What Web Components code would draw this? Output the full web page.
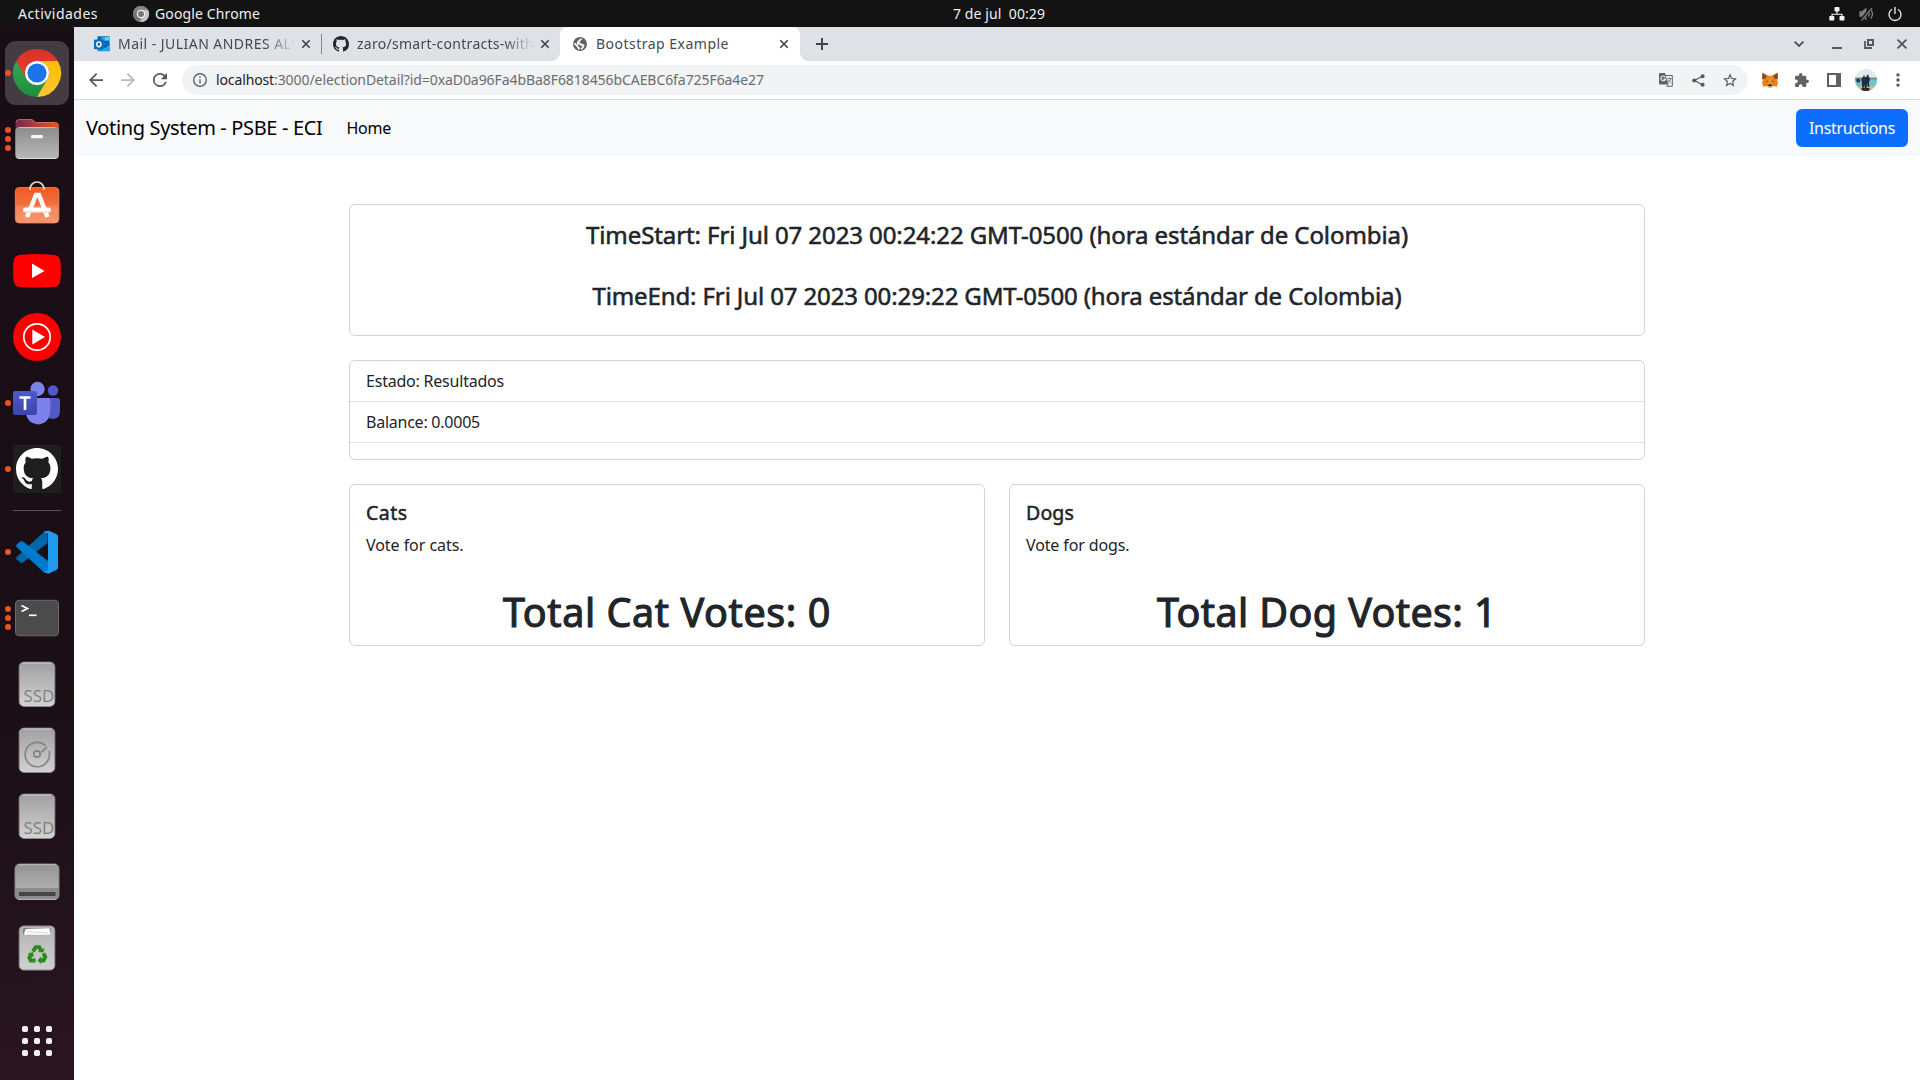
<!DOCTYPE html>
<html lang="es">
<head>
<meta charset="utf-8">
<title>Bootstrap Example</title>
<style>
html,body{margin:0;height:100%;overflow:hidden;background:#fff}
body{font-family:"Noto Sans","Open Sans",sans-serif}
</style>
</head>
<body>
<desk-top></desk-top>
<script>
const define=(name,html,setup)=>customElements.define(name,class extends HTMLElement{
  connectedCallback(){
    if(this.shadowRoot)return;
    this.attachShadow({mode:'open'}).innerHTML=typeof html==='function'?html(this):html;
    if(setup)setup(this);
  }
});

/* ---------- icon shapes ---------- */
const GH='<path d="M8 0C3.58 0 0 3.58 0 8c0 3.54 2.29 6.53 5.47 7.59.4.07.55-.17.55-.38 0-.19-.01-.82-.01-1.49-2.01.37-2.53-.49-2.69-.94-.09-.23-.48-.94-.82-1.13-.28-.15-.68-.52-.01-.53.63-.01 1.08.58 1.23.82.72 1.21 1.87.87 2.33.66.07-.52.28-.87.51-1.07-1.78-.2-3.64-.89-3.64-3.95 0-.87.31-1.59.82-2.15-.08-.2-.36-1.02.08-2.12 0 0 .67-.21 2.2.82.64-.18 1.32-.27 2-.27s1.36.09 2 .27c1.53-1.04 2.2-.82 2.2-.82.44 1.1.16 1.92.08 2.12.51.56.82 1.27.82 2.15 0 3.07-1.87 3.75-3.65 3.95.29.25.54.73.54 1.48 0 1.07-.01 1.93-.01 2.2 0 .21.15.46.55.38A8.01 8.01 0 0 0 16 8c0-4.42-3.58-8-8-8z"/>';
const lin=(id,a,b,dir='x1="0" y1="0" x2="0" y2="1"')=>`<linearGradient id="${id}" ${dir}><stop offset="0" stop-color="${a}"/><stop offset="1" stop-color="${b}"/></linearGradient>`;
const SSD=`<defs>${lin('g','#a0a0a0','#d2d2d2')}</defs><rect x="6.2" y="2.2" width="35.6" height="44" rx="4.5" fill="url(#g)" stroke="#929292"/><path d="M10 3h28M10 45.7h28" stroke="#dedede" stroke-width=".8"/>`;
const ICONS={
 chrome:['0 0 48 48',`<defs>${lin('r','#d93025','#ea4335')}${lin('gn','#34a853','#1e8e3e')}${lin('y','#fbbc04','#fcc934')}</defs>
  <path fill="url(#gn)" d="M13.6 30 3.2 12A24 24 0 0 0 24 48l10.4-18A12 12 0 0 1 13.6 30z"/>
  <path fill="url(#y)" d="M34.4 30 24 48A24 24 0 0 0 44.8 12H24a12 12 0 0 1 10.4 18z"/>
  <path fill="url(#r)" d="M13.6 30A12 12 0 0 1 24 12h20.8A24 24 0 0 0 3.2 12z"/>
  <circle cx="24" cy="24" r="12" fill="#fff"/><circle cx="24" cy="24" r="9.6" fill="#1a73e8"/>`],
 chromegray:['0 0 16 16',`<circle cx="8" cy="8" r="8" fill="#a5a5a5"/><path d="M8 8 1.1 4A8 8 0 0 0 7 15.9z" fill="#757575"/><path d="M8 4h7A8 8 0 0 0 1.1 4L5 9z" fill="#858585"/><path d="M15 4H8v4l3 2-3.4 6A8 8 0 0 0 15 4z" fill="#c5c5c5"/><circle cx="8" cy="8" r="4.2" fill="#f4f4f4"/><circle cx="8" cy="8" r="3" fill="#777"/>`],
 files:['0 0 48 48',`<defs>${lin('f','#8c8c8c','#b9b9b9')}${lin('o','#772953','#e95420','x1="0" y1="0" x2="1" y2="0"')}</defs>
  <path d="M2.5 34V8q0-4 4-4h11q2 0 3.200 1.300L22.500 7H42q4 0 4 4v24z" fill="url(#o)"/><path d="M3 8q0-3.500 3.500-3.500h11q2 0 3.200 1.300L22.300 7.500H42" fill="none" stroke="#c98" stroke-opacity=".5"/>
  <rect x="2.300" y="12" width="43.600" height="32" rx="4" fill="url(#f)"/><path d="M6 12.600h36" stroke="#c4c4c4"/><path d="M5 43.500h38" stroke="#dcdcdc"/><rect x="18" y="20" width="12" height="3.200" rx="1.200" fill="#f4f4f4"/>`],
 store:['0 0 48 48',`<defs>${lin('s','#f05a22','#f5875a')}</defs><rect x="2.300" y="6.500" width="43.600" height="35.500" rx="4" fill="url(#s)" stroke="#f38b5d" stroke-width=".8"/><path d="M3 24.500h42.300V38q0 3.500-3.500 3.500H6.500Q3 41.500 3 38z" fill="#fff" fill-opacity=".13"/>
  <path d="M17 9V8a7 7 0 0 1 14 0v1" fill="none" stroke="#f6dcae" stroke-width="1.700"/><path d="M14 36 23 14h3l8.500 22" fill="none" stroke="#fff" stroke-width="4.500"/><rect x="10" y="26.500" width="28" height="5" rx="2.500" fill="#fff"/><path d="M11 31h26" stroke="#f7b79c" stroke-width=".7"/>`],
 youtube:['0 0 48 48','<path d="M7 8Q24 6 41 8q5.500.5 6.300 6 1.200 10 0 20-.8 5.500-6.300 6-17 1.600-34 0-5.500-.5-6.300-6-1.200-10 0-20Q1.500 8.500 7 8z" fill="#f00"/><path d="m19 16.500 12.500 7.500L19 31z" fill="#fff"/>'],
 ytmusic:['0 0 48 48','<circle cx="24" cy="24" r="24" fill="#f00"/><circle cx="24" cy="24" r="13.200" fill="none" stroke="#fff" stroke-width="1.700"/><path d="M19.300 16.500 32 24l-12.700 7.500z" fill="#fff"/>'],
 teams:['0 0 48 48',`<defs>${lin('t','#5059c9','#3c45ab')}</defs><circle cx="40" cy="11.500" r="5.200" fill="#5059c9"/><path d="M34 19h10.500q2.500 0 2.500 2.500V32q0 7.500-7 8-5 0-7-4z" fill="#5059c9"/><circle cx="24.500" cy="10" r="7.200" fill="#7b83eb"/><path d="M15 19h20q2.300 0 2.300 2.300V32q-1 12.500-12.500 13.500Q14 44.500 12.500 33z" fill="#7b83eb"/><rect y="12" width="24" height="24" rx="2" fill="url(#t)"/><path d="M6.500 18.500h11M12 18.500V31" stroke="#fff" stroke-width="2.700" fill="none"/>`],
 github:['0 0 48 48',`<rect width="48" height="48" fill="#1e1e1e"/><g transform="translate(3 3) scale(2.625)" fill="#fff">${GH}</g>`],
 gh:['0 0 16 16',`<g fill="#24292f">${GH}</g>`],
 vscode:['0 0 48 48',`<path d="M34.500 3.500v12L10 34.500q-1.500 1-2.700 0l-3.700-3q-1.200-1.300 0-2.500L31 4z" fill="#0065a9"/><path d="M35 44.500V32.500L10 13.500q-1.500-1-2.700 0l-3.700 3q-1.200 1.300 0 2.500L31 44.500z" fill="#007acc"/><path d="M33 3.300q2-1 3.500-.3L44 6.600q1 .5 1 2v31q0 1.500-1 2l-7.500 3.600q-1.500.7-3-.2L35 43V5z" fill="#1f9cf0"/><path d="M30.500 3.500Q33 6 35 5v38q-2-1-4.500 1.500l5.500.5V3z" fill="#1f9cf0"/><path d="M35 15v18L23.500 24z" fill="#1b0f16"/>`],
 terminal:['0 0 48 48','<rect x="2.500" y="6.300" width="43" height="35.500" rx="3.500" fill="#4b4b4b" stroke="#6a6a6a"/><path d="m8.500 11.500 6 3-6 3" fill="none" stroke="#fff" stroke-width="1.700"/><path d="M16 21.300h7.500" stroke="#fff" stroke-width="1.700"/>'],
 ssd:['0 0 48 48',SSD+'<text x="10.500" y="41.500" font-family="Open Sans,Noto Sans,sans-serif" font-size="16" textLength="30.800" lengthAdjust="spacingAndGlyphs" fill="#808080">SSD</text>'],
 disk:['0 0 48 48',SSD+'<path d="M32.500 19.500A12.200 12.200 0 1 0 36 25M28.500 26l5.500-5" fill="none" stroke="#858585" stroke-width="1.700"/><circle cx="24" cy="28" r="3.200" fill="none" stroke="#858585" stroke-width="1.800"/>'],
 drive:['0 0 48 48',`<defs>${lin('d','#939393','#bcbcbc')}</defs><rect x="2" y="6" width="44" height="35.500" rx="4.500" fill="url(#d)" stroke="#858585"/><path d="M2 30h44v7q0 4.500-4.500 4.500h-35Q2 41.500 2 37z" fill="#8c8c8c"/><path d="M5 6.700h38M5 41.300h38" stroke="#c8c8c8" stroke-width=".8"/><rect x="6" y="34" width="36.500" height="4" fill="#454545"/>`],
 trash:['0 0 48 48',`<defs>${lin('w','#b4b4b4','#d0d0d0')}</defs><rect x="6.200" y="2" width="35.600" height="44" rx="4.500" fill="url(#w)" stroke="#8f8f8f"/><path d="M10 11V6q0-2 2-2h24q2 0 2 2v5z" fill="#777"/><path d="m10.500 11 2-6 24-1 1.500 7z" fill="#fff" stroke="#aaa" stroke-width=".5"/><path d="m13 7.500 22 1.500" stroke="#bbb" stroke-width=".6"/>
  <g transform="translate(2.400 3.200) scale(.9)"><g fill="none" stroke="#2b8a1c" stroke-width="4.300"><path d="m19.500 27 3-4.800h4l2.500 4.500"/><path d="m31.200 29 2 4-2 4h-4.500"/><path d="M22.500 37H17l-1.500-3 2.300-4.500"/></g><g fill="#2b8a1c"><path d="m25 27.500 6 .5 1.500-5z"/><path d="m28.500 32.500-4 4.500 4 4z"/><path d="m13.500 29.500 6-2 1 6z"/></g></g>`],
 apps:['0 0 48 48','<g fill="#f2f0f0">'+[9,21,33].map(y=>[9,21,33].map(x=>`<rect x="${x}" y="${y}" width="6" height="6" rx="1.700"/>`).join('')).join('')+'</g>'],
 network:['0 0 16 14','<g fill="#f2f2f2"><rect x="5.500" width="5" height="4.500" rx=".8"/><rect x=".3" y="9" width="5" height="4.500" rx=".8"/><rect x="10.500" y="9" width="5" height="4.500" rx=".8"/></g><path d="M8 4v3M3 9.500V7.300h10v2.200" fill="none" stroke="#f2f2f2" stroke-width="1.100"/>'],
 mute:['0 0 15 14','<path d="M.3 4.300h2.500L7.500.600v12.800L2.800 9.700H.3z" fill="#7c7c7c"/><path d="M9.500 4.500q1.600 2.500 0 5M11.800 2.500q3.400 4.500 0 9" fill="none" stroke="#7c7c7c" stroke-width="1.400"/><path d="M2 13.500 12.500.5" stroke="#131313" stroke-width="3"/><path d="M2.500 13.500 13 .800" stroke="#7c7c7c" stroke-width="1.300"/>'],
 power:['0 0 14 14','<path d="M4 2.300a6 6 0 1 0 6 0M7 0v7" fill="none" stroke="#f2f2f2" stroke-width="1.300"/>'],
 outlook:['0 0 16 16','<path d="M3.500.3h12v8h-12z" fill="#0364b8"/><path d="M7.500 1h8v4h-8z" fill="#28a8ea"/><path d="M11 1h4.500v3H11z" fill="#50d9ff"/><path d="M3.500 8.500 16 8v7.300H4q-1 0-.5-1z" fill="#1490df"/><path d="m7 15.300 9-7.200v6.500z" fill="#28a8ea"/><path d="m9 9 7-1-5 4z" fill="#0a4b85"/><rect y="3.500" width="9.700" height="9.700" rx=".8" fill="#0f6cbd"/><ellipse cx="4.850" cy="8.300" rx="2.100" ry="2.400" fill="none" stroke="#fff" stroke-width="1.400"/>'],
 x:['0 0 10 10','<path d="m1.300 1.300 7.400 7.400M8.700 1.300 1.300 8.700" stroke="#3f4246" stroke-width="1.600"/>'],
 bigx:['0 0 10 10','<path d="m.6.600 8.800 8.800M9.400.600.600 9.400" stroke="#54585c" stroke-width="2"/>'],
 plus:['0 0 12 12','<path d="M6 0v12M0 6h12" stroke="#3f4246" stroke-width="1.900"/>'],
 globe:['0 0 14 14','<circle cx="7" cy="7" r="7" fill="#5f6368"/><path d="M8.300 1.500q-.2 1.600-1.800 1.800-.6.300-.4 1.100-.1.800-1.300.9v1.300h2.400q1 .2 1.200 1.500h2v1.400q-.7 1.800-2.600 2.500M1.400 6.300l3 2.700q.3 1.300 1.400 1.700v1.800" fill="none" stroke="#fff" stroke-width="1.700"/>'],
 chevron:['0 0 10 6','<path d="m.6.600 4.400 4.400L9.400.600" fill="none" stroke="#4d5156" stroke-width="1.900"/>'],
 min:['0 0 10 10','<path d="M0 9h10" stroke="#54585c" stroke-width="2"/>'],
 restore:['0 0 10 10','<path d="M4 1h5v5H4z" fill="none" stroke="#54585c" stroke-width="2"/><path d="M1 2v7h7" fill="none" stroke="#54585c" stroke-width="1.800"/>'],
 back:['4 4 16 16','<path d="M20 11H7.830l5.590-5.590L12 4l-8 8 8 8 1.410-1.410L7.830 13H20z" fill="#54585d"/>'],
 fwd:['4 4 16 16','<path d="M4 11h12.170l-5.590-5.590L12 4l8 8-8 8-1.410-1.410L16.170 13H4z" fill="#b8babc"/>'],
 reload:['4 4 16 16','<path d="M17.650 6.350A7.960 7.960 0 0 0 12 4a8 8 0 1 0 7.730 10h-2.080A6 6 0 1 1 12 6c1.660 0 3.140.69 4.220 1.780L13 11h7V4z" fill="#54585d"/>'],
 info:['2 2 20 20','<path d="M11 17h2v-6h-2zm0-8h2V7h-2zm1-7a10 10 0 1 0 0 20 10 10 0 0 0 0-20zm0 18a8 8 0 1 1 0-16 8 8 0 0 1 0 16z" fill="#5f6368"/>'],
 translate:['0 0 14 14','<path d="M6 2.500h7.300v10.800H7.500" fill="#f1f3f4" stroke="#5f6368"/><path d="M1 0h5l3.500 11.500H1q-1 0-1-1V1q0-1 1-1z" fill="#5f6368"/><path d="M6.300 4.200A2.400 2.400 0 1 0 6.500 6H4.300" fill="none" stroke="#f1f3f4" stroke-width="1.100"/><path d="M8.500 5.500h4M10.500 4.500v1M11.800 5.500q-.5 2.500-3 4M9 6.500q1 2 3 3.500M7.500 13l2-2" fill="none" stroke="#5f6368" stroke-width=".8"/>'],
 share:['0 0 13 13','<path d="M10.500 2.200 2.300 6.500l8.200 4.300" fill="none" stroke="#54585d" stroke-width="1.200"/><g fill="#54585d"><circle cx="10.600" cy="2.200" r="2"/><circle cx="2.200" cy="6.500" r="2"/><circle cx="10.600" cy="10.800" r="2"/></g>'],
 star:['2 2 20 19','<path d="m22 9.240-7.190-.62L12 2 9.190 8.630 2 9.240l5.460 4.730L5.820 21 12 17.270 18.180 21l-1.630-7.030zM12 15.400l-3.760 2.270 1-4.280-3.320-2.880 4.380-.38L12 6.100l1.710 4.040 4.380.38-3.320 2.880 1 4.280z" fill="#54585d"/>'],
 fox:['0 0 16 15','<path d="m.5.200 5.800 3h3.400l5.800-3 .5 4.300-.8 3.500.8 2.500-1.200 3.800-3.300-.7L9.300 15H6.700l-2.200-1.400-3.300.7L0 10.500.8 8 0 4.500z" fill="#e8821e"/><path d="m.5.200 4.300 3L3.600 6.200l-3 .3L0 4.500zM15.500.200l-4.300 3 1.200 3 3 .3.600-2z" fill="#8a4d22"/><path d="m6.300 3.200-1.500 4.500 1.700 5h3l1.700-5-1.500-4.500z" fill="#f08a24"/><path d="m4 8.600 1.800-.3.400 1.300zM12 8.600l-1.800-.3-.4 1.300z" fill="#233447"/><path d="m6.500 12.700.4-.7h2.200l.4.700-.4 1.300H6.900z" fill="#161616"/><path d="m5.500 13.800 1.400-.2h2.200l1.400.2L9.300 15H6.700z" fill="#c0ad9e"/>'],
 puzzle:['2 1 21 21','<path d="M20.500 11H19V7a2 2 0 0 0-2-2h-4V3.500a2.500 2.500 0 0 0-5 0V5H4a2 2 0 0 0-2 2v3.800h1.500a2.700 2.700 0 0 1 0 5.400H2V20c0 1.100.9 2 2 2h3.800v-1.500a2.700 2.700 0 0 1 5.400 0V22H17a2 2 0 0 0 2-2v-4h1.500a2.500 2.500 0 0 0 0-5z" fill="#5f6368"/>'],
 panel:['0 0 14 14','<path d="M1 1h12v12H1z" fill="#fff" stroke="#5f6368" stroke-width="2"/><path d="M9 0h5v14H9z" fill="#5f6368"/>'],
 avatar:['0 0 22 22','<defs><clipPath id="c"><circle cx="11" cy="11" r="11"/></clipPath></defs><g clip-path="url(#c)"><path d="M0 0h22v22H0z" fill="#dfeaf5"/><path d="M0 8.500h22v2.500H0z" fill="#7b8f74"/><path d="M0 10.500h22v6.500H0z" fill="#74c2cb"/><path d="M0 17h22v5H0z" fill="#c9b98b"/><path d="m6.500 9.500 2-2 1.500 1 2-1.500 2 .5 1 3-1 3 .3 4.500h-1.500l-.8-4-.5 7H9.800l-.3-5-1 3H7.300z" fill="#232a3d"/><path d="M1 11q2.500-3 4.500.5l-1 2H2z" fill="#3b3a3e"/><path d="M6.500 19h8v3h-8z" fill="#2c2b2a"/><circle cx="9" cy="7.300" r="1" fill="#7b5c49"/><circle cx="12.700" cy="6.600" r="1" fill="#5d4438"/></g>'],
 menu:['0 0 4 14','<g fill="#54585d"><circle cx="2" cy="1.900" r="1.700"/><circle cx="2" cy="7" r="1.700"/><circle cx="2" cy="12.100" r="1.700"/></g>']
};
define('ui-icon',el=>{
  const [vb,s]=ICONS[el.getAttribute('name')],w=el.getAttribute('w'),h=el.getAttribute('h')||w;
  return `<style>:host{display:block;flex:none;width:${w}px;height:${h}px}svg{display:block;width:100%;height:100%;overflow:visible}</style><svg viewBox="${vb}" preserveAspectRatio="xMidYMid meet">${s}</svg>`;
});

/* ---------- GNOME top bar ---------- */
define('top-bar',`<style>
:host{display:grid;grid-template-columns:1fr auto 1fr;align-items:center;height:27px;background:#131313;color:#f0f0f0;font-size:14px;line-height:26px}
div{display:flex;align-items:center}.l{padding-left:18px}.app{gap:6px;margin-left:35px}.r{justify-content:flex-end;gap:14px;padding-right:18px}.clock{padding-left:78px}
</style><div class="l"><fit-text w="80">Actividades</fit-text><div class="app"><ui-icon name="chromegray" w="16"></ui-icon><fit-text w="105">Google Chrome</fit-text></div></div>
<div class="clock"><fit-text w="92">7 de jul  00:29</fit-text></div>
<div class="r"><ui-icon name="network" w="16" h="14"></ui-icon><ui-icon name="mute" w="15" h="14"></ui-icon><ui-icon name="power" w="14"></ui-icon></div>`);

/* ---------- dock ---------- */
define('dock-item',el=>`<style>
:host{display:grid;grid-template-columns:16px 42px 16px;align-items:center;justify-items:center;height:64px;flex:none}
.dots{display:flex;flex-direction:column;gap:2.800px;z-index:1}.dots i{width:6px;height:6px;border-radius:50%;background:#e95420}
.tile{display:grid;place-items:center;width:64px;height:64px;border-radius:11px}
:host([active]) .tile{background:#453b42}
</style><span class="dots">${'<i></i>'.repeat(+el.getAttribute('dots')||0)}</span><span class="tile"><ui-icon name="${el.getAttribute('icon')}" w="48"></ui-icon></span>`);
define('app-dock',`<style>
:host{display:flex;flex-direction:column;gap:2px;width:74px;box-sizing:border-box;padding-top:14px;background:linear-gradient(165deg,#190e15 0%,#1a0f16 60%,#29151f 100%)}
hr{width:48px;height:1px;border:0;margin:7px auto 7px;background:#5d555a;flex:none}.end{margin-top:27px}
</style>
<dock-item icon="chrome" dots="1" active></dock-item><dock-item icon="files" dots="3"></dock-item><dock-item icon="store"></dock-item><dock-item icon="youtube"></dock-item><dock-item icon="ytmusic"></dock-item><dock-item icon="teams" dots="1"></dock-item><dock-item icon="github" dots="1"></dock-item><hr>
<dock-item icon="vscode" dots="1"></dock-item><dock-item icon="terminal" dots="3"></dock-item><dock-item icon="ssd"></dock-item><dock-item icon="disk"></dock-item><dock-item icon="ssd"></dock-item><dock-item icon="drive"></dock-item><dock-item icon="trash"></dock-item><dock-item class="end" icon="apps"></dock-item>`);

/* ---------- browser chrome ---------- */
define('browser-tab',el=>`<style>
:host{display:flex;align-items:center;box-sizing:border-box;height:34px;color:#45494d;font-size:14px;line-height:34px;flex:none;position:relative}
:host([active]){background:#fff;border-radius:8px 8px 0 0}
:host([active])::before,:host([active])::after{content:"";position:absolute;bottom:0;width:8px;height:8px}
:host([active])::before{left:-8px;background:radial-gradient(circle at 0 0,transparent 7.500px,#fff 8px)}
:host([active])::after{right:-8px;background:radial-gradient(circle at 100% 0,transparent 7.500px,#fff 8px)}
.t{overflow:hidden;flex:1;margin-left:8px;white-space:nowrap}
:host([active]) .t{margin-left:9px}
:host(:not([active])) .t{margin-right:6px;-webkit-mask:linear-gradient(90deg,#000 calc(100% - 30px),transparent)}
</style><ui-icon name="${el.getAttribute('icon')}" w="${el.getAttribute('iw')}"></ui-icon><span class="t"><slot></slot></span><ui-icon name="x" w="10"></ui-icon>`);
define('tab-strip',`<style>
:host{display:flex;align-items:center;height:34px;background:#dee1e6}
.a{width:217px;margin-left:20px}.b{width:217px;margin-left:11px}.c{width:240px;margin-left:10px;padding:0 11px 0 13px}
.sep{width:1px;height:20px;background:#85888c;margin-left:10px}.plus{margin-left:16px}.win{display:flex;align-items:center;gap:22px;margin-left:auto;padding-right:13px}
</style>
<browser-tab class="a" icon="outlook" iw="16"><fit-text w="182">Mail - JULIAN ANDRES ALV</fit-text></browser-tab><span class="sep"></span>
<browser-tab class="b" icon="gh" iw="16"><fit-text w="177">zaro/smart-contracts-with</fit-text></browser-tab>
<browser-tab class="c" icon="globe" iw="14" active><fit-text w="133">Bootstrap Example</fit-text></browser-tab>
<ui-icon class="plus" name="plus" w="12"></ui-icon>
<div class="win"><ui-icon style="margin-right:6px" name="chevron" w="10" h="6"></ui-icon><ui-icon name="min" w="10"></ui-icon><ui-icon name="restore" w="10"></ui-icon><ui-icon style="margin-left:1px" name="bigx" w="10"></ui-icon></div>`);
define('address-bar',`<style>
:host{display:flex;align-items:center;height:38px;padding-left:15px;background:#fff;border-bottom:1px solid #d9dadc}
.nav{display:flex;gap:18px}.omni{display:flex;align-items:center;width:1566px;height:30px;box-sizing:border-box;margin-left:15px;padding:0 11px;border-radius:15px;background:#f1f3f4;font-size:14px;line-height:30px;color:#6a6d71}
.host{color:#202124;margin-left:9px}.acts{display:flex;align-items:center;gap:18.500px;margin-left:auto}
.ext{display:flex;align-items:center;margin-left:14px}
</style><div class="nav"><ui-icon name="back" w="14"></ui-icon><ui-icon name="fwd" w="14"></ui-icon><ui-icon name="reload" w="14"></ui-icon></div>
<div class="omni"><ui-icon name="info" w="14"></ui-icon><fit-text class="host" w="58">localhost</fit-text><fit-text w="490">:3000/electionDetail?id=0xaD0a96Fa4bBa8F6818456bCAEBC6fa725F6a4e27</fit-text>
<div class="acts"><ui-icon name="translate" w="14"></ui-icon><ui-icon name="share" w="13"></ui-icon><ui-icon name="star" w="14"></ui-icon></div></div>
<div class="ext"><ui-icon name="fox" w="16"></ui-icon><ui-icon style="margin-left:17px" name="puzzle" w="14"></ui-icon><ui-icon style="margin-left:18px" name="panel" w="14"></ui-icon><ui-icon style="margin-left:14px" name="avatar" w="22"></ui-icon><ui-icon style="margin-left:19px" name="menu" w="4" h="14"></ui-icon></div>`);

/* ---------- page ---------- */
define('nav-bar',`<style>
:host{display:flex;align-items:center;height:56px;box-sizing:border-box;padding:0 12px;background:#f8f9fa;color:#000;font-size:16px}
.brand{font-size:20px}.home{margin-left:24px}
button{margin:0 0 0 auto;width:112px;height:38px;padding:0;border:0;border-radius:6px;background:#0d6efd;color:#fff;font:inherit}
</style><fit-text class="brand" w="236.500">Voting System - PSBE - ECI</fit-text><fit-text class="home" w="44.500">Home</fit-text><button><fit-text w="86">Instructions</fit-text></button>`);
define('info-card',`<style>:host{display:block;box-sizing:border-box;border:1px solid #d2d3d4;border-radius:6px;background:#fff;overflow:hidden}</style><slot></slot>`);
define('time-card',`<style>:host{display:block}.b{display:flex;flex-direction:column;align-items:center;gap:32px;height:130px;box-sizing:border-box;padding-top:15px;font-size:24px;line-height:29px;-webkit-text-stroke:.55px #212529}</style>
<info-card><div class="b"><fit-text w="822">TimeStart: Fri Jul 07 2023 00:24:22 GMT-0500 (hora estándar de Colombia)</fit-text><fit-text w="809">TimeEnd: Fri Jul 07 2023 00:29:22 GMT-0500 (hora estándar de Colombia)</fit-text></div></info-card>`);
define('status-list',`<style>:host{display:block}.r{height:24px;padding:8px 16px;border-bottom:1px solid #dfe0e1}.e{height:16px}</style>
<info-card><div class="r"><fit-text w="138">Estado: Resultados</fit-text></div><div class="r"><fit-text w="114">Balance: 0.0005</fit-text></div><div class="e"></div></info-card>`);
define('vote-card',el=>{const a=n=>el.getAttribute(n);return `<style>:host{display:block;flex:1}.b{padding:16px;height:103px;box-sizing:border-box}.h{font-size:19.500px;line-height:24px;margin-bottom:8px;-webkit-text-stroke:.5px #212529}.t{text-align:center;font-size:39.500px;line-height:48px;height:57px;-webkit-text-stroke:1.100px #212529}</style>
<info-card><div class="b"><div class="h"><fit-text w="${a('hw')}">${a('heading')}</fit-text></div><div><fit-text w="${a('pw')}">${a('text')}</fit-text></div></div><div class="t"><fit-text w="${a('tw')}">${a('total')}</fit-text></div></info-card>`});
define('election-page',`<style>
:host{display:flex;flex-direction:column;flex:1;background:#fff;color:#212529;font-size:16px;line-height:24px}
main{display:flex;flex-direction:column;gap:24px;width:1296px;margin:48px auto 0}.row{display:flex;gap:24px}
</style><nav-bar></nav-bar><main><time-card></time-card><status-list></status-list><div class="row">
<vote-card heading="Cats" hw="41.500" text="Vote for cats." pw="97.500" total="Total Cat Votes: 0" tw="328"></vote-card>
<vote-card heading="Dogs" hw="48" text="Vote for dogs." pw="103.500" total="Total Dog Votes: 1" tw="340"></vote-card></div></main>`);
define('desk-top',`<style>
:host{display:flex;flex-direction:column;height:1080px;width:1920px;overflow:hidden}
.b{display:flex;flex:1;min-height:0}.w{display:flex;flex-direction:column;flex:1;min-width:0}
</style><top-bar></top-bar><div class="b"><app-dock></app-dock><div class="w"><tab-strip></tab-strip><address-bar></address-bar><election-page></election-page></div></div>`);

/* Single-line label whose tracking is tuned so it fills a set width. */
define('fit-text','<style>:host{display:inline-block;width:max-content;white-space:pre;vertical-align:top;flex:none}</style><slot></slot>',el=>{
  const w=+el.getAttribute('w'),n=el.textContent.length;
  el.style.letterSpacing=((w-el.getBoundingClientRect().width)/n)+'px';
});
</script>
</body>
</html>
